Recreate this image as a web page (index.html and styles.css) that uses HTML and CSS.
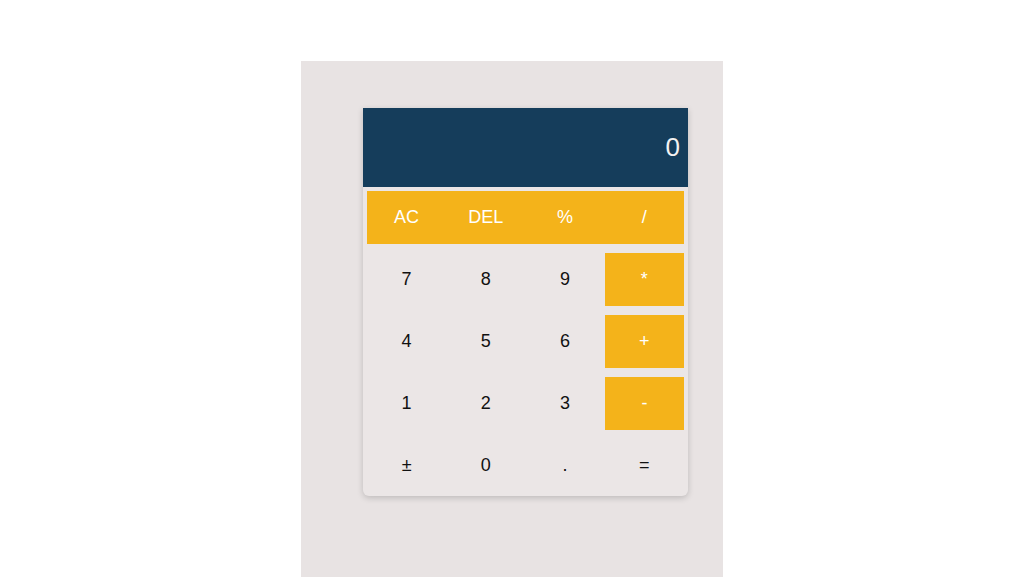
FILE: index.html
```html
<!DOCTYPE html>
<html>
<head>
<meta charset="utf-8">
<link rel="stylesheet" href="styles.css">
</head>
<body>
<div class="stage">
  <div class="panel">
    <div class="calc">
      <div class="display">0</div>
      <div class="keys">
        <button class="key op">AC</button>
        <button class="key op">DEL</button>
        <button class="key op">%</button>
        <button class="key op">/</button>
        <button class="key">7</button>
        <button class="key">8</button>
        <button class="key">9</button>
        <button class="key op">*</button>
        <button class="key">4</button>
        <button class="key">5</button>
        <button class="key">6</button>
        <button class="key op">+</button>
        <button class="key">1</button>
        <button class="key">2</button>
        <button class="key">3</button>
        <button class="key op">-</button>
        <button class="key">±</button>
        <button class="key">0</button>
        <button class="key">.</button>
        <button class="key">=</button>
      </div>
    </div>
  </div>
</div>
</body>
</html>
```

FILE: styles.css
```css
html, body {
  margin: 0;
  padding: 0;
  background: #ffffff;
  font-family: "Liberation Sans", Arial, sans-serif;
  overflow: hidden;
}
.stage {
  display: flex;
  justify-content: center;
  padding-top: 61px;
}
.panel {
  width: 422px;
  height: 516px;
  box-sizing: border-box;
  background: #e8e3e3;
  padding: 47px 35px 0 62px;
}
.calc {
  width: 325px;
  background: #ebe6e6;
  border-radius: 0 0 6px 6px;
  box-shadow: 0 2px 6px rgba(0, 0, 0, 0.18);
}
.display {
  height: 78.5px;
  background: #153d5b;
  color: #f2f2f2;
  font-size: 26px;
  display: flex;
  align-items: center;
  justify-content: flex-end;
  padding-right: 8px;
  box-sizing: border-box;
}
.keys {
  display: grid;
  grid-template-columns: repeat(4, 1fr);
  grid-auto-rows: 53.5px;
  row-gap: 8.5px;
  padding: 4px 4px 3.5px 4px;
}
.key {
  border: none;
  background: transparent;
  font-family: "Liberation Sans", Arial, sans-serif;
  font-size: 18px;
  color: #111111;
  padding: 0;
  margin: 0;
}
.key.op {
  background: #f4b31a;
  color: #ffffff;
}
```
